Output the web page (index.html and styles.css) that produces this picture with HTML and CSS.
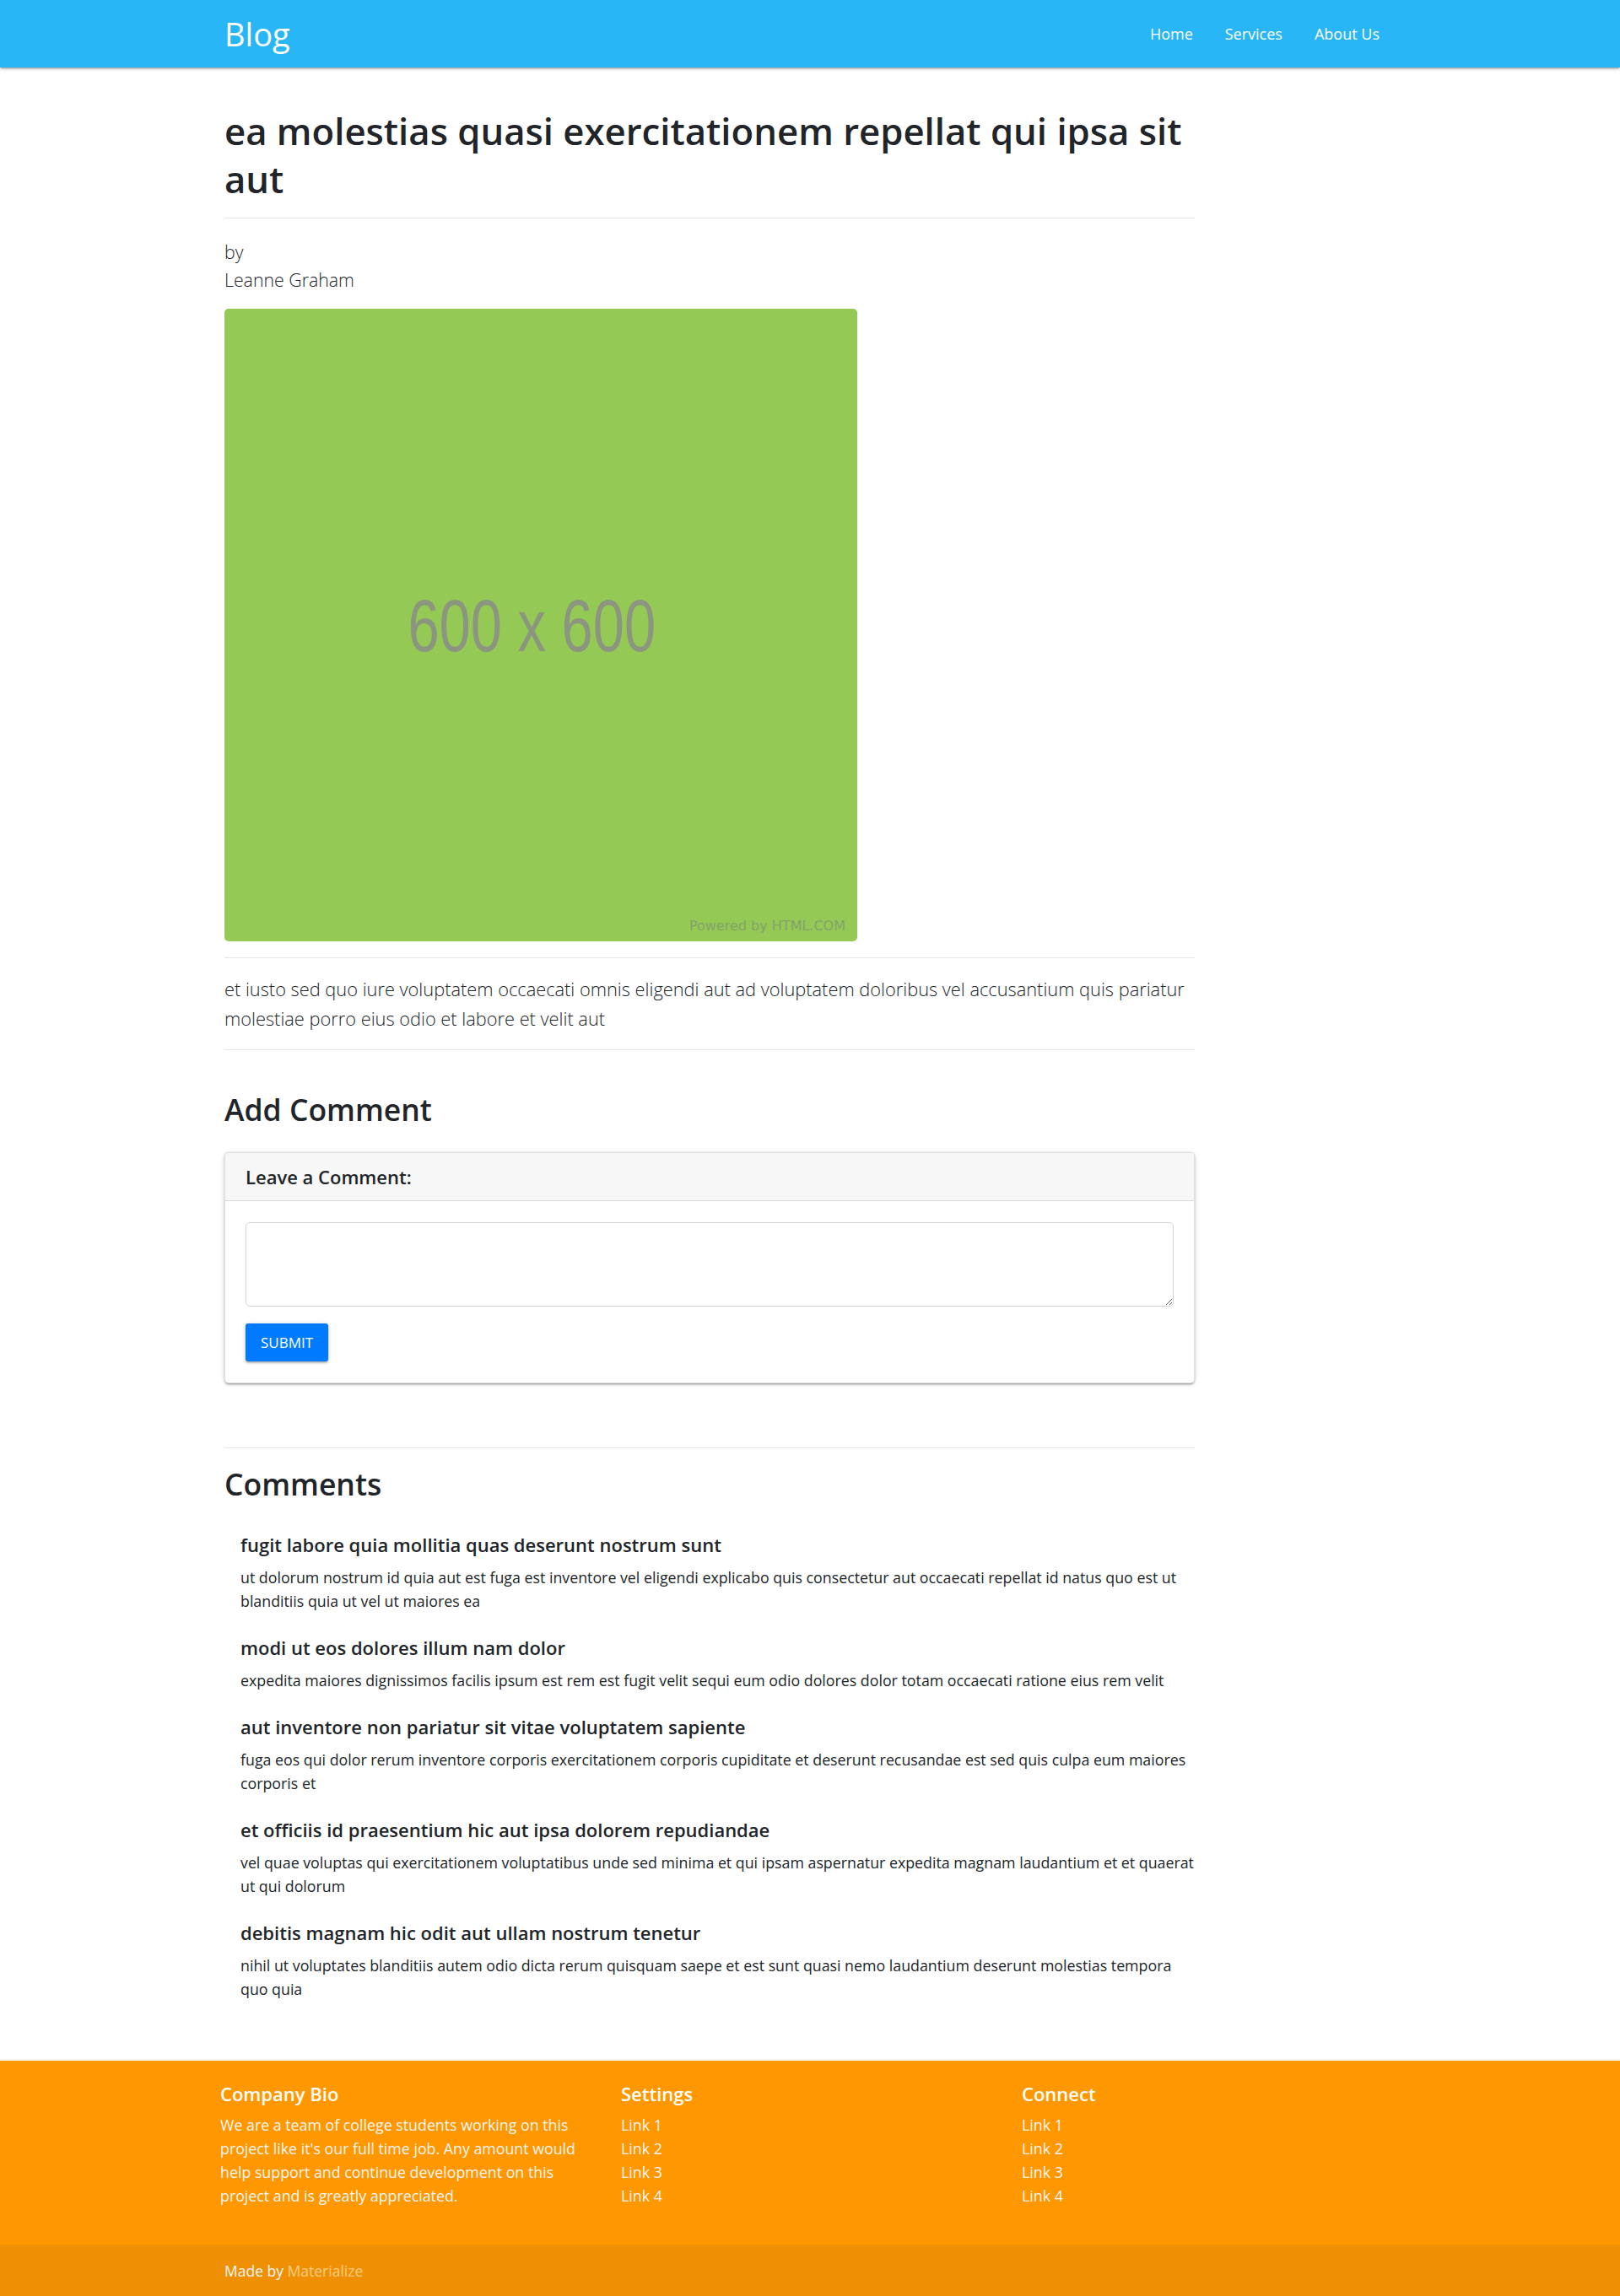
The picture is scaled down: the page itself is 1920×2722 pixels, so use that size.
FILE: index.html
```html
<!DOCTYPE html>
<html lang="en">
<head>
<meta charset="utf-8">
<title>Blog</title>
<link rel="stylesheet" href="styles.css">
</head>
<body>
<nav class="navbar">
  <div class="container nav-inner">
    <a class="brand" href="#">Blog</a>
    <ul class="nav-links">
      <li><a href="#">Home</a></li>
      <li><a href="#">Services</a></li>
      <li><a href="#">About Us</a></li>
    </ul>
  </div>
</nav>

<main class="container">
  <div class="post">
    <h1 class="post-title">ea molestias quasi exercitationem repellat qui ipsa sit aut</h1>
    <hr class="rule rule-title">
    <div class="byline">
      <div>by</div>
      <div>Leanne Graham</div>
    </div>
    <div class="placeholder">
      <span class="ph-size">600 x 600</span>
      <span class="ph-credit">Powered by HTML.COM</span>
    </div>
    <hr class="rule rule-image">
    <p class="lead">et iusto sed quo iure voluptatem occaecati omnis eligendi aut ad voluptatem doloribus vel accusantium quis pariatur molestiae porro eius odio et labore et velit aut</p>
    <hr class="rule rule-body">
    <h2 class="section-title">Add Comment</h2>
    <div class="card">
      <div class="card-header">
        <h5 class="card-title">Leave a Comment:</h5>
      </div>
      <div class="card-body">
        <textarea class="comment-input"></textarea>
        <button class="btn-submit" type="button">Submit</button>
      </div>
    </div>
    <hr class="rule rule-comments">
    <h2 class="section-title section-comments">Comments</h2>
    <ul class="comments">
      <li class="comment">
        <h5 class="comment-title">fugit labore quia mollitia quas deserunt nostrum sunt</h5>
        <p class="comment-body">ut dolorum nostrum id quia aut est fuga est inventore vel eligendi explicabo quis consectetur aut occaecati repellat id natus quo est ut blanditiis quia ut vel ut maiores ea</p>
      </li>
      <li class="comment">
        <h5 class="comment-title">modi ut eos dolores illum nam dolor</h5>
        <p class="comment-body">expedita maiores dignissimos facilis ipsum est rem est fugit velit sequi eum odio dolores dolor totam occaecati ratione eius rem velit</p>
      </li>
      <li class="comment">
        <h5 class="comment-title">aut inventore non pariatur sit vitae voluptatem sapiente</h5>
        <p class="comment-body">fuga eos qui dolor rerum inventore corporis exercitationem corporis cupiditate et deserunt recusandae est sed quis culpa eum maiores corporis et</p>
      </li>
      <li class="comment">
        <h5 class="comment-title">et officiis id praesentium hic aut ipsa dolorem repudiandae</h5>
        <p class="comment-body">vel quae voluptas qui exercitationem voluptatibus unde sed minima et qui ipsam aspernatur expedita magnam laudantium et et quaerat ut qui dolorum</p>
      </li>
      <li class="comment">
        <h5 class="comment-title">debitis magnam hic odit aut ullam nostrum tenetur</h5>
        <p class="comment-body">nihil ut voluptates blanditiis autem odio dicta rerum quisquam saepe et est sunt quasi nemo laudantium deserunt molestias tempora quo quia</p>
      </li>
    </ul>
  </div>
</main>

<footer class="page-footer">
  <div class="container">
    <div class="footer-grid">
      <div class="footer-col">
        <h5 class="footer-title">Company Bio</h5>
        <p class="footer-text">We are a team of college students working on this project like it's our full time job. Any amount would help support and continue development on this project and is greatly appreciated.</p>
      </div>
      <div class="footer-col">
        <h5 class="footer-title">Settings</h5>
        <ul class="footer-links">
          <li><a href="#">Link 1</a></li>
          <li><a href="#">Link 2</a></li>
          <li><a href="#">Link 3</a></li>
          <li><a href="#">Link 4</a></li>
        </ul>
      </div>
      <div class="footer-col">
        <h5 class="footer-title">Connect</h5>
        <ul class="footer-links">
          <li><a href="#">Link 1</a></li>
          <li><a href="#">Link 2</a></li>
          <li><a href="#">Link 3</a></li>
          <li><a href="#">Link 4</a></li>
        </ul>
      </div>
    </div>
  </div>
  <div class="footer-copyright">
    <div class="container">Made by <a class="credit-link" href="#">Materialize</a></div>
  </div>
</footer>
</body>
</html>
```

FILE: styles.css
```css
* {
  box-sizing: border-box;
}

html, body {
  margin: 0;
  padding: 0;
}

body {
  font-family: "Open Sans", "Noto Sans", "Liberation Sans", sans-serif;
  color: #212529;
  background: #ffffff;
}

a {
  text-decoration: none;
  color: inherit;
}

ul {
  list-style: none;
  margin: 0;
  padding: 0;
}

.container {
  width: 1388px;
  margin: 0 auto;
}

/* Navbar */
.navbar {
  height: 80px;
  background: #29b6f6;
  box-shadow: 0 2px 2px 0 rgba(0,0,0,0.14), 0 3px 1px -2px rgba(0,0,0,0.12), 0 1px 5px 0 rgba(0,0,0,0.2);
  position: relative;
  z-index: 2;
}

.nav-inner {
  display: flex;
  justify-content: space-between;
  align-items: stretch;
  height: 80px;
}

.brand {
  color: #ffffff;
  font-size: 38px;
  line-height: 80px;
  font-weight: 400;
}

.nav-links {
  display: flex;
}

.nav-links a {
  display: block;
  color: #ffffff;
  font-size: 18px;
  line-height: 80px;
  padding: 0 19px;
}

/* Post */
.post {
  width: 1150px;
  padding-top: 47px;
}

.post-title {
  margin: 0;
  font-size: 43.7px;
  line-height: 57px;
  font-weight: 600;
  color: #212529;
}

.rule {
  border: 0;
  border-top: 1px solid rgba(0,0,0,0.1);
  margin: 0;
}

.rule-title {
  margin-top: 17px;
  margin-bottom: 23px;
}

.byline {
  font-size: 21.3px;
  line-height: 33px;
  font-weight: 300;
  color: #212529;
}

.placeholder {
  margin-top: 18px;
  width: 750px;
  height: 750px;
  background: #93c954;
  border-radius: 5px;
  display: flex;
  align-items: center;
  justify-content: center;
  position: relative;
}

.ph-size {
  font-family: "Liberation Sans", Arial, sans-serif;
  font-size: 88px;
  color: #8b957f;
  transform: scaleX(0.76);
  margin-left: -22px;
  margin-top: 2px;
}

.ph-credit {
  position: absolute;
  right: 14px;
  bottom: 9px;
  font-family: "DejaVu Sans", Verdana, sans-serif;
  font-size: 16px;
  color: #85a26a;
}

.rule-image {
  margin-top: 19px;
  margin-bottom: 19px;
}

.lead {
  margin: 0;
  font-size: 21.8px;
  line-height: 35px;
  font-weight: 300;
  color: #212529;
}

.rule-body {
  margin-top: 19px;
  margin-bottom: 49px;
}

.section-title {
  margin: 0;
  font-size: 35.5px;
  line-height: 42.6px;
  font-weight: 600;
  color: #212529;
}

/* Card */
.card {
  margin-top: 29px;
  border: 1px solid rgba(0,0,0,0.125);
  border-radius: 5px;
  background: #ffffff;
  box-shadow: 0 2px 2px 0 rgba(0,0,0,0.14), 0 3px 1px -2px rgba(0,0,0,0.12), 0 1px 5px 0 rgba(0,0,0,0.2);
  overflow: hidden;
}

.card-header {
  background: #f7f7f7;
  border-bottom: 1px solid rgba(0,0,0,0.125);
  padding: 15px 24px;
}

.card-title {
  margin: 0;
  font-size: 22px;
  line-height: 26.4px;
  font-weight: 600;
  color: #212529;
}

.card-body {
  padding: 25px 24px;
  display: flex;
  flex-direction: column;
  align-items: flex-start;
  gap: 20px;
}

.comment-input {
  display: block;
  width: 100%;
  height: 100px;
  border: 1px solid #ced4da;
  border-radius: 5px;
  padding: 8px 15px;
  font-family: inherit;
  font-size: 18px;
  resize: vertical;
  background: #ffffff;
}

.btn-submit {
  height: 45px;
  padding: 0 18px;
  border: 0;
  border-radius: 3px;
  background: #007bff;
  color: #ffffff;
  font-family: inherit;
  font-size: 17px;
  text-transform: uppercase;
  box-shadow: 0 2px 2px 0 rgba(0,0,0,0.14), 0 3px 1px -2px rgba(0,0,0,0.12), 0 1px 5px 0 rgba(0,0,0,0.2);
  cursor: pointer;
}

.rule-comments {
  margin-top: 76px;
  margin-bottom: 21px;
}

/* Comments */
.comments {
  margin-top: 37.7px;
  padding: 0 0 0 19px;
  display: flex;
  flex-direction: column;
  gap: 28.6px;
}

.comment-title {
  margin: 0 0 11px;
  font-size: 22px;
  line-height: 26.4px;
  font-weight: 600;
  color: #212529;
}

.comment-body {
  margin: 0;
  font-size: 17.8px;
  line-height: 28px;
  color: #212529;
}

/* Footer */
.page-footer {
  margin-top: 71px;
  background: #ff9800;
  color: #f5f5f5;
}

.page-footer > .container {
  padding-top: 26px;
  padding-bottom: 44px;
}

.footer-grid {
  display: grid;
  grid-template-columns: repeat(3, 475px);
  margin-left: -5px;
}

.footer-title {
  margin: 0 0 10px;
  font-size: 22px;
  line-height: 26.4px;
  font-weight: 600;
  color: #ffffff;
}

.footer-text {
  margin: 0;
  width: 445px;
  font-size: 17.8px;
  line-height: 28px;
  color: #f5f5f5;
}

.footer-links li {
  font-size: 17.8px;
  line-height: 28px;
}

.footer-links a {
  color: #f5f5f5;
}

.footer-copyright {
  height: 63px;
  line-height: 63px;
  background: rgba(51,51,51,0.08);
  font-size: 17.5px;
  color: #f5f5f5;
}

.credit-link {
  color: #ffcc80;
}
```
